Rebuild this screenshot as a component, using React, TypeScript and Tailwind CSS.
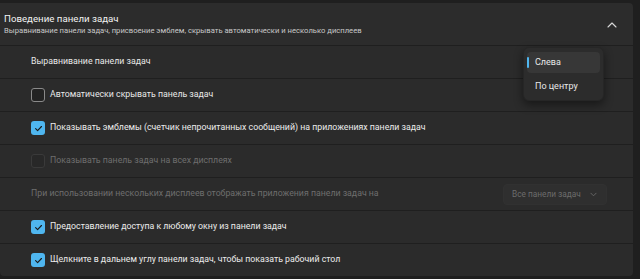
import React from "react";

function Check({ checked, disabled }: { checked?: boolean; disabled?: boolean }) {
  if (checked) {
    return (
      <div className="w-[14px] h-[14px] rounded-[3px] bg-[#4fb6ef] flex items-center justify-center shrink-0">
        <svg width="9" height="9" viewBox="0 0 10 10" fill="none">
          <path d="M1.8 5.2 L4 7.3 L8.3 2.8" stroke="#1a1a1a" strokeWidth="1.3" strokeLinecap="round" strokeLinejoin="round" />
        </svg>
      </div>
    );
  }
  return (
    <div
      className={
        disabled
          ? "w-[14px] h-[14px] rounded-[3px] border border-[#3a3a3a] bg-[#282828] shrink-0"
          : "w-[14px] h-[14px] rounded-[3px] border border-[#8a8a8a] bg-[#232323] shrink-0"
      }
    />
  );
}

function Row({ children, className = "" }: { children: React.ReactNode; className?: string }) {
  return <div className={"h-[32px] bg-[#2b2b2b] flex items-center pl-[31px] pr-[26px] " + className}>{children}</div>;
}

export default function App() {
  return (
    <div
      className="relative w-[640px] h-[279px] bg-[#1f1f1f] pt-[3px] pr-[7px] overflow-hidden"
      style={{ fontFamily: 'Roboto, "Noto Sans", sans-serif' }}
    >
      <div className="flex flex-col gap-[1px]">
        <div className="h-[42px] bg-[#2c2c2c] rounded-tr-[4px] flex items-center pl-[4px] pr-[16px] pt-[1px]">
          <div className="flex flex-col flex-1">
            <div className="text-[9.7px] leading-[13px] text-[#f2f2f2]">Поведение панели задач</div>
            <div className="text-[7.65px] leading-[12px] text-[#c8c8c8]">
              Выравнивание панели задач, присвоение эмблем, скрывать автоматически и несколько дисплеев
            </div>
          </div>
          <svg width="10" height="6" viewBox="0 0 10 6" fill="none" className="mt-[1px]">
            <path d="M1 5 L5 1 L9 5" stroke="#d8d8d8" strokeWidth="1.1" strokeLinecap="round" strokeLinejoin="round" />
          </svg>
        </div>
        <Row>
          <span className="text-[8.75px] text-[#e8e8e8]">Выравнивание панели задач</span>
        </Row>
        <Row>
          <div className="flex items-center gap-[5px]">
            <Check />
            <span className="text-[8.75px] text-[#e8e8e8]">Автоматически скрывать панель задач</span>
          </div>
        </Row>
        <Row>
          <div className="flex items-center gap-[5px]">
            <Check checked />
            <span className="text-[8.75px] text-[#ececec]">
              Показывать эмблемы (счетчик непрочитанных сообщений) на приложениях панели задач
            </span>
          </div>
        </Row>
        <Row>
          <div className="flex items-center gap-[5px]">
            <Check disabled />
            <span className="text-[8.75px] text-[#6e6e6e]">Показывать панель задач на всех дисплеях</span>
          </div>
        </Row>
        <Row className="justify-between">
          <span className="text-[8.75px] text-[#6e6e6e]">
            При использовании нескольких дисплеев отображать приложения панели задач на
          </span>
          <div className="w-[104px] h-[21px] rounded-[4px] bg-[#2f2f2f] border border-[#313131] flex items-center justify-between pl-[8px] pr-[9px]">
            <span className="text-[8.3px] text-[#6c6c6c] whitespace-nowrap">Все панели задач</span>
            <svg width="7" height="5" viewBox="0 0 8 5" fill="none">
              <path d="M1 1 L4 4 L7 1" stroke="#6c6c6c" strokeWidth="1" strokeLinecap="round" strokeLinejoin="round" />
            </svg>
          </div>
        </Row>
        <Row>
          <div className="flex items-center gap-[5px]">
            <Check checked />
            <span className="text-[8.75px] text-[#ececec]">Предоставление доступа к любому окну из панели задач</span>
          </div>
        </Row>
        <Row className="rounded-b-[4px]">
          <div className="flex items-center gap-[5px]">
            <Check checked />
            <span className="text-[8.75px] text-[#ececec]">
              Щелкните в дальнем углу панели задач, чтобы показать рабочий стол
            </span>
          </div>
        </Row>
      </div>

      <div className="absolute left-[523px] top-[47px] w-[81px] h-[54px] rounded-[6px] bg-[#2c2c2c] border border-[#262626] shadow-[0_4px_10px_rgba(0,0,0,0.45)] px-[3px] pt-[4px] flex flex-col">
        <div className="relative h-[21px] rounded-[4px] bg-[#373737] flex items-center pl-[8px]">
          <div className="absolute left-[0px] top-[5px] w-[2px] h-[11px] rounded-full bg-[#4fb6ef]" />
          <span className="text-[9px] text-[#e8e8e8]">Слева</span>
        </div>
        <div className="h-[26px] flex items-center pl-[8px] pt-[2px]">
          <span className="text-[9px] text-[#e8e8e8]">По центру</span>
        </div>
      </div>
    </div>
  );
}
